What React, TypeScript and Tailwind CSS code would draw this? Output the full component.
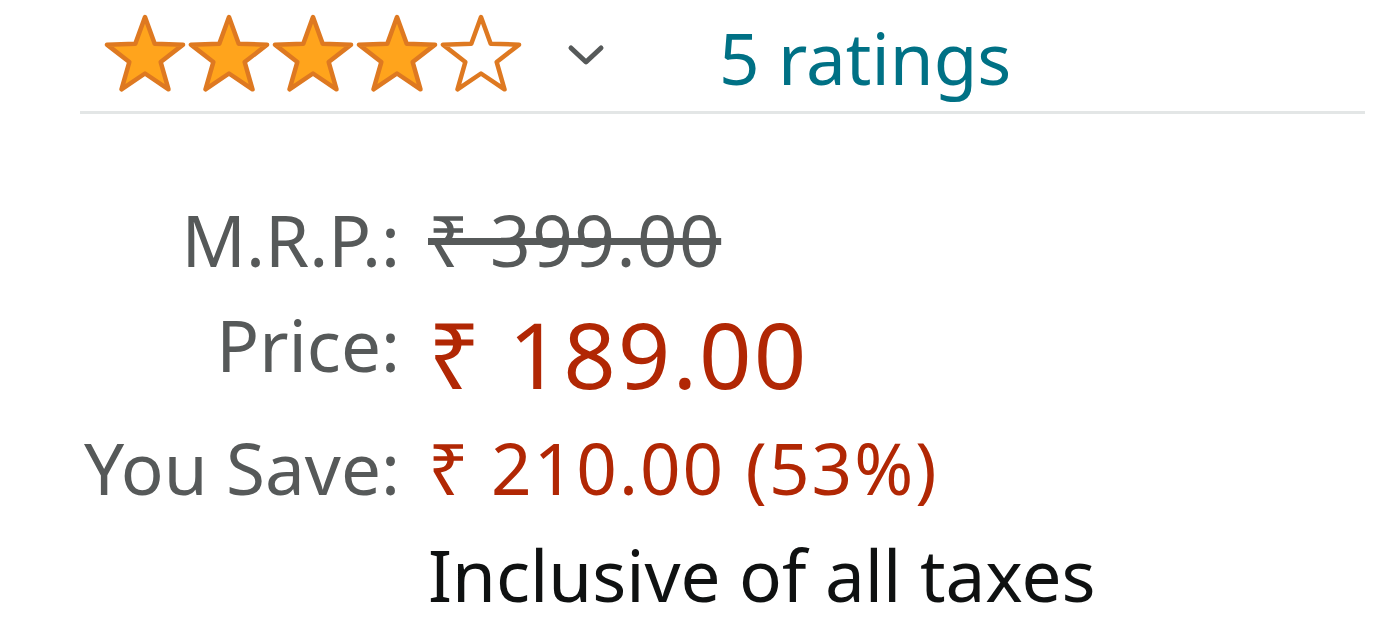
import React from "react";

const STAR_POINTS =
  "42,3 51.70,29.65 80.04,30.64 57.69,48.10 65.51,75.36 42,59.5 18.49,75.36 26.31,48.10 3.96,30.64 32.30,29.65";

function Star({ filled }: { filled: boolean }) {
  return (
    <svg width="84" height="80" viewBox="0 0 84 80" className="block shrink-0">
      <polygon
        points={STAR_POINTS}
        fill={filled ? "#FFA41C" : "#FFFFFF"}
        stroke="#DE7921"
        strokeWidth="4.5"
        strokeLinejoin="round"
      />
    </svg>
  );
}

export default function App() {
  const font = { fontFamily: '"Noto Sans", "DejaVu Sans", sans-serif' };
  return (
    <div className="w-[1393px] h-[642px] bg-white overflow-hidden" style={font}>
      <div className="ml-[80px] w-[1285px] h-[114px] border-b-[3px] border-[#e3e6e6] flex items-start pl-[23px]">
        <div className="flex mt-[14px]">
          {[true, true, true, true, false].map((f, i) => (
            <Star key={i} filled={f} />
          ))}
        </div>
        <svg width="40" height="24" viewBox="0 0 40 24" className="block shrink-0 ml-[43px] mt-[43px]">
          <path d="M5 5 L20 19 L35 5" fill="none" stroke="#565959" strokeWidth="5" strokeLinecap="round" strokeLinejoin="round" />
        </svg>
        <span className="ml-[113px] mt-[22px] text-[71px] leading-[71px] text-[#007185] whitespace-nowrap">
          5 ratings
        </span>
      </div>

      <div className="mt-[73px] grid grid-cols-[400px_1fr] gap-x-[28px] items-start whitespace-nowrap">
        <div className="text-right text-[71px] leading-[105px] text-[#565959]">M.R.P.:</div>
        <div className="text-[71px] leading-[105px] tracking-[1.5px] text-[#565959] line-through decoration-[#565959]">
          ₹ 399.00
        </div>

        <div className="text-right text-[71px] leading-[105px] text-[#565959]">Price:</div>
        <div className="text-[92px] leading-[123px] tracking-[2px] text-[#B12704]">₹ 189.00</div>

        <div className="text-right text-[71px] leading-[105px] text-[#565959]">You Save:</div>
        <div className="text-[71px] leading-[105px] tracking-[2px] text-[#B12704]">₹ 210.00 (53%)</div>

        <div></div>
        <div className="mt-[2px] text-[71px] leading-[105px] text-[#0F1111]">Inclusive of all taxes</div>
      </div>
    </div>
  );
}
